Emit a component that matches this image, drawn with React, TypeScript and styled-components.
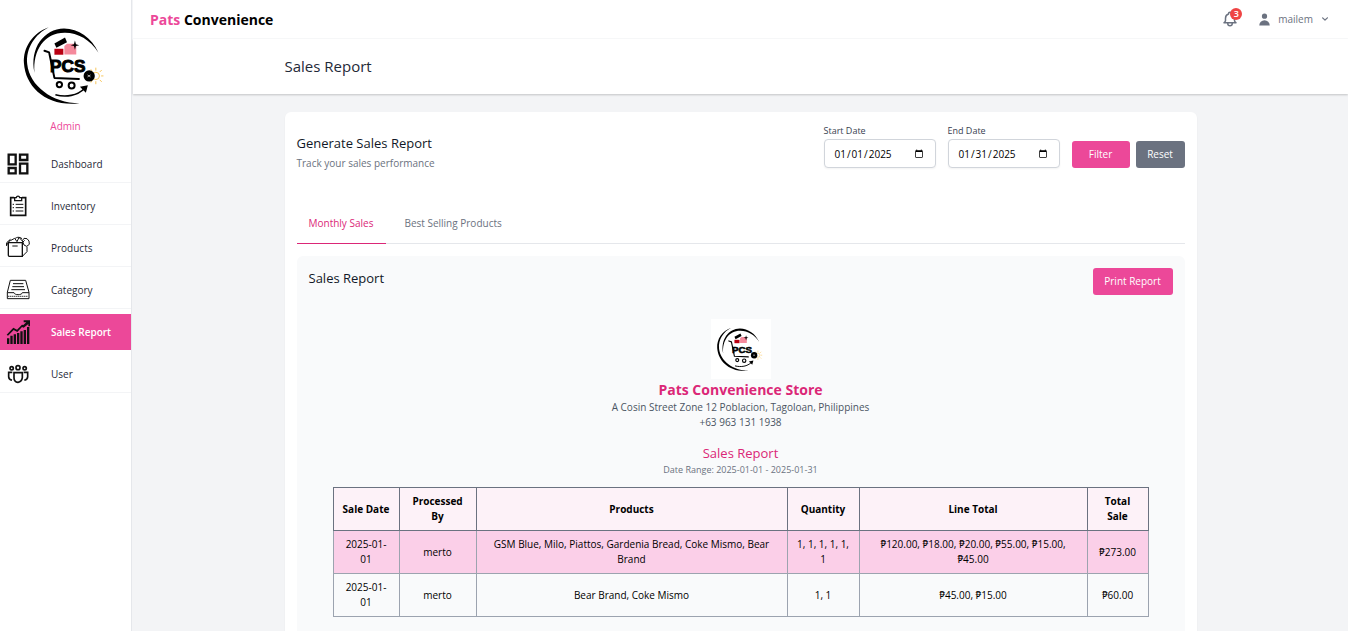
import React from "react";
import styled, { createGlobalStyle, css } from "styled-components";

const GlobalStyle = createGlobalStyle`
  *, *::before, *::after { box-sizing: border-box; }
  html { scrollbar-width: none; }
  body {
    margin: 0;
    background: #f3f4f6;
    color: #111827;
    font-family: "Open Sans", "Noto Sans", sans-serif;
    font-size: 10px;
    line-height: 15px;
  }
  h1, h2, h3, p { margin: 0; }
  button, input { font-family: inherit; }
`;

const Shell = styled.div`
  display: flex;
  gap: 1px;
  min-height: 100vh;
`;

const Sidebar = styled.aside`
  flex: 0 0 132px;
  background: #ffffff;
  border-right: 1px solid #e5e7eb;
  padding-top: 12px;
`;

const Brand = styled.div`
  display: flex;
  flex-direction: column;
  align-items: center;
  color: #ec4899;
`;

const Role = styled.span`
  font-size: 10px;
  line-height: 17px;
`;

const Nav = styled.nav`
  display: flex;
  flex-direction: column;
  gap: 6px;
  margin-top: 11px;
`;

const NavItem = styled.a<{ $active?: boolean }>`
  display: flex;
  align-items: center;
  gap: 21px;
  height: 36px;
  padding-left: 6px;
  font-size: 10px;
  line-height: 17px;
  color: #1f2937;
  text-decoration: none;
  box-shadow: 0 1px 0 #f3f4f6;
  svg { flex: none; color: #111111; }
  span { padding-top: 1px; }
  ${(p) =>
    p.$active &&
    css`
      background: #ec4899;
      color: #ffffff;
      font-weight: 600;
      box-shadow: none;
    `}
`;

const Main = styled.div`
  flex: 1;
  min-width: 0;
`;

const TopBar = styled.header`
  display: flex;
  align-items: center;
  justify-content: space-between;
  height: 39px;
  padding: 0 17px;
  background: #ffffff;
  border-bottom: 1px solid #f9fafb;
`;

const SiteName = styled.a`
  font-size: 14px;
  line-height: 21px;
  font-weight: 700;
  color: #000000;
  text-decoration: none;
  span { color: #ec4899; }
`;

const TopActions = styled.div`
  display: flex;
  align-items: center;
  gap: 18px;
  color: #6b7280;
`;

const IconButton = styled.button`
  position: relative;
  display: flex;
  padding: 0;
  border: 0;
  background: none;
  color: inherit;
`;

const Badge = styled.span`
  position: absolute;
  top: -2px;
  right: -3px;
  width: 12px;
  height: 12px;
  border-radius: 50%;
  background: #ef4444;
  color: #ffffff;
  font-size: 9px;
  line-height: 12px;
  font-weight: 600;
  text-align: center;
`;

const UserButton = styled.button`
  display: flex;
  align-items: center;
  gap: 6px;
  padding: 0;
  border: 0;
  background: none;
  color: #6b7280;
  font-size: 10px;
  line-height: 15px;
`;

const PageHeader = styled.div`
  background: #ffffff;
  box-shadow: 0 1px 2px rgba(0, 0, 0, 0.2);
`;

const Container = styled.div`
  max-width: 960px;
  margin: 0 auto;
  padding: 18px 24px;
`;

const PageTitle = styled.h1`
  font-size: 15px;
  line-height: 19px;
  font-weight: 400;
  color: #1f2937;
`;

const Card = styled.section`
  padding: 12px;
  background: #ffffff;
  border-radius: 6px;
  box-shadow: 0 1px 2px rgba(0, 0, 0, 0.05);
`;

const CardTop = styled.div`
  display: flex;
  justify-content: space-between;
  align-items: flex-start;
`;

const Intro = styled.div`
  padding-top: 9px;
`;

const Heading = styled.h2`
  font-size: 13px;
  line-height: 21px;
  font-weight: 500;
  color: #111827;
`;

const Subtle = styled.p`
  margin-top: 2px;
  font-size: 10px;
  line-height: 15px;
  color: #6b7280;
`;

const Filters = styled.form`
  display: flex;
  align-items: flex-end;
  gap: 12px;
`;

const Field = styled.div`
  display: flex;
  flex-direction: column;
  gap: 2px;
  width: 112px;
  label {
    font-size: 9px;
    line-height: 13px;
    color: #374151;
  }
  input {
    width: 100%;
    height: 29px;
    padding: 0 9px;
    border: 1px solid #d1d5db;
    border-radius: 4px;
    background: #ffffff;
    color: #000000;
    font-size: 10px;
    box-shadow: 0 1px 2px rgba(0, 0, 0, 0.05);
  }
  input::-webkit-calendar-picker-indicator {
    width: 10px;
    height: 10px;
    padding: 2px;
  }
`;

const ButtonPair = styled.div`
  display: flex;
  gap: 6px;
`;

const Button = styled.button<{ $tone?: "grey"; $width: number }>`
  width: ${(p) => p.$width}px;
  height: 27px;
  padding: 0;
  border: 0;
  border-radius: 3px;
  background: ${(p) => (p.$tone === "grey" ? "#6b7280" : "#ec4899")};
  color: #ffffff;
  font-size: 10px;
  line-height: 15px;
`;

const Tabs = styled.div`
  display: flex;
  gap: 6px;
  margin-top: 33px;
  box-shadow: inset 0 -1px 0 #e5e7eb;
`;

const Tab = styled.button<{ $active?: boolean }>`
  padding: 12px 13px 12px 12px;
  border: 0;
  border-bottom: 1px solid ${(p) => (p.$active ? "#db2777" : "transparent")};
  background: none;
  color: ${(p) => (p.$active ? "#db2777" : "#6b7280")};
  font-size: 10px;
  line-height: 15px;
  font-weight: 500;
`;

const Panel = styled.div`
  margin-top: 12px;
  padding: 12px;
  background: #f9fafb;
  border-radius: 6px;
`;

const PanelTop = styled.div`
  display: flex;
  justify-content: space-between;
  align-items: flex-start;
`;

const Report = styled.div`
  padding: 24px;
  text-align: center;
`;

const LogoTile = styled.div`
  display: flex;
  width: 60px;
  margin: 0 auto;
  background: #ffffff;
`;

const StoreName = styled.h2`
  font-size: 14px;
  line-height: 21px;
  font-weight: 700;
  color: #db2777;
`;

const StoreLine = styled.p`
  font-size: 10px;
  line-height: 15px;
  color: #4b5563;
`;

const ReportTitle = styled.h3`
  margin-top: 13px;
  font-size: 13px;
  line-height: 21px;
  font-weight: 500;
  color: #db2777;
`;

const Range = styled.p`
  font-size: 9px;
  line-height: 12px;
  color: #6b7280;
`;

const SalesTable = styled.table`
  width: 100%;
  margin-top: 11px;
  table-layout: fixed;
  border-collapse: collapse;
  font-size: 10px;
  line-height: 15px;
  color: #000000;
  th, td { padding: 6px 9px; }
  td { border: 1px solid #9ca3af; }
  th {
    border: 1px solid #6b7280;
    background: #fdf2f8;
    font-weight: 700;
  }
  tbody tr:nth-child(odd) { background: #fbcfe8; }
`;

const Col = styled.col<{ $width?: number }>`
  width: ${(p) => (p.$width ? `${p.$width}px` : "auto")};
`;

const Logo = ({ size }: { size: number }) => (
  <svg width={size} height={size} viewBox="40 36 320 320" fill="none" role="img" aria-label="PCS">
    <path d="M148 82C99 99 70 143 73 191C78 263 140 323 241 312C157 311 90 258 83 194C78 144 107 103 148 82Z" fill="#000" />
    <path d="M105 220C89 145 134 87 194 86C238 87 277 113 298 159C273 120 236 99 197 99C136 98 99 151 105 220Z" fill="#000" />
    <path d="M165 131L197 113L203 127L171 144Z" fill="#000" />
    <path d="M165 147H192V165H165Z" fill="#b90012" />
    <path d="M195 139L203 132H231V164H195Z" fill="#f58a9c" />
    <path d="M227 122L230 133L240 136L230 139L227 150L224 139L214 136L224 133Z" fill="#000" />
    <path d="M135 153L149 158L165 235L239 238" stroke="#000" strokeWidth="6" strokeLinecap="round" strokeLinejoin="round" />
    <text x="152" y="216" fontFamily="Liberation Sans, sans-serif" fontWeight="700" fontSize="52" fill="#000" stroke="#000" strokeWidth="3">PCS</text>
    <circle cx="180" cy="255" r="8" stroke="#000" strokeWidth="6" />
    <circle cx="217" cy="258" r="9" stroke="#000" strokeWidth="6" />
    <path d="M168 286C200 294 234 289 256 267" stroke="#000" strokeWidth="5" />
    <path d="M242 262L266 257L260 280Z" fill="#000" />
    <g stroke="#f7c65c" strokeWidth="3">
      <circle cx="290" cy="229" r="11" />
      <path d="M290 213V204M290 245V254M306 229H313M302 217L308 211M302 241L308 247M279 215L275 209M279 243L275 249" />
    </g>
    <circle cx="270" cy="229" r="17" fill="#000" />
    <path d="M265 226L274 232M265 232L274 226" stroke="#fff" strokeWidth="2" />
  </svg>
);

const icon = (viewBox: string, children: React.ReactNode) => (
  <svg width="24" height="24" viewBox={viewBox} fill="none" stroke="currentColor" aria-hidden="true">
    {children}
  </svg>
);

const icons = {
  dashboard: icon(
    "18 36 72 72",
    <path strokeWidth="7" d="M26 44H47V73H26ZM60 44H82V60H60ZM26 84H47V100H26ZM60 71H82V100H60Z" />
  ),
  inventory: icon(
    "18 162 72 72",
    <g strokeWidth="5">
      <path d="M42 173H32V226H77V173H66" />
      <path d="M44 173V182H65V173H59C58 167 50 167 49 173Z" strokeWidth="4" />
      <path d="M38 193H42M38 203H42M38 213H42M47 193H70M47 203H70M47 213H70" strokeWidth="3" />
    </g>
  ),
  products: icon(
    "18 288 72 72",
    <g strokeWidth="4">
      <path d="M25 308H67V349H28Q25 349 25 346Z" />
      <path d="M67 349L81 335V320M67 308L74 301M25 308L20 315M25 308L31 299M20 318L19 309L31 298M37 318H53" strokeWidth="3" />
      <path d="M31 302L44 295L51 305L57 292L68 304M45 296C50 291 58 290 66 296" strokeWidth="3" />
      <path d="M67 302L72 295L81 296L87 303L88 313L80 319L72 315Z" strokeWidth="3" />
    </g>
  ),
  category: icon(
    "18 39 72 72",
    <g strokeWidth="3">
      <path d="M22 82L31 46H77L87 82V101H22Z" />
      <path d="M22 83H42C43 91 66 91 67 83H87" />
      <path d="M39 56H70M37 65H72M34 74H75" />
      <path d="M25 94H85" strokeDasharray="3 3" strokeWidth="4" />
    </g>
  ),
  sales: icon(
    "18 165 72 72",
    <g stroke="none" fill="currentColor">
      <path d="M21 220H28V237H21ZM31 212H38V237H31ZM41 208H48V237H41ZM51 204H58V237H51ZM61 199H68V237H61ZM71 195H78V237H71ZM81 186H88V237H81Z" />
      <path d="M20 209L40 188L51 194L66 179L70 180L79 172H71V166H90V184H85V177L71 188L66 186L52 201L41 195L24 212Z" />
    </g>
  ),
  user: icon(
    "18 291 72 72",
    <g strokeWidth="5">
      <circle cx="35" cy="310" r="5" />
      <circle cx="54" cy="308" r="6" />
      <circle cx="74" cy="310" r="5" />
      <path d="M42 323H67V338C66 345 62 351 54 352C46 351 42 345 42 338Z" />
      <path d="M37 322H26V335C26 341 30 344 36 346M71 322H83V335C83 341 79 344 73 346" />
    </g>
  ),
};

const navItems: { label: string; icon: React.ReactNode; active?: boolean }[] = [
  { label: "Dashboard", icon: icons.dashboard },
  { label: "Inventory", icon: icons.inventory },
  { label: "Products", icon: icons.products },
  { label: "Category", icon: icons.category },
  { label: "Sales Report", icon: icons.sales, active: true },
  { label: "User", icon: icons.user },
];

const columns: { title: string; width?: number }[] = [
  { title: "Sale Date", width: 66 },
  { title: "Processed By", width: 77 },
  { title: "Products" },
  { title: "Quantity", width: 72 },
  { title: "Line Total", width: 228 },
  { title: "Total Sale", width: 61 },
];

const sales = [
  ["2025-01-01", "merto", "GSM Blue, Milo, Piattos, Gardenia Bread, Coke Mismo, Bear Brand", "1, 1, 1, 1, 1, 1", "₱120.00, ₱18.00, ₱20.00, ₱55.00, ₱15.00, ₱45.00", "₱273.00"],
  ["2025-01-01", "merto", "Bear Brand, Coke Mismo", "1, 1", "₱45.00, ₱15.00", "₱60.00"],
];

export default function App() {
  return (
    <>
      <GlobalStyle />
      <Shell>
        <Sidebar>
          <Brand>
            <Logo size={106} />
            <Role>Admin</Role>
          </Brand>
          <Nav>
            {navItems.map((item) => (
              <NavItem key={item.label} href="#" $active={item.active}>
                {item.icon}
                <span>{item.label}</span>
              </NavItem>
            ))}
          </Nav>
        </Sidebar>
        <Main>
          <TopBar>
            <SiteName href="#">
              <span>Pats</span> Convenience
            </SiteName>
            <TopActions>
              <IconButton type="button" aria-label="Notifications">
                <svg width="18" height="18" viewBox="0 0 24 24" fill="none" stroke="currentColor" strokeWidth="2" strokeLinecap="round" strokeLinejoin="round">
                  <path d="M15 17h5l-1.405-1.405A2.032 2.032 0 0118 14.158V11a6.002 6.002 0 00-4-5.659V5a2 2 0 10-4 0v.341C7.67 6.165 6 8.388 6 11v3.159c0 .538-.214 1.055-.595 1.436L4 17h5m6 0v1a3 3 0 11-6 0v-1m6 0H9" />
                </svg>
                <Badge>3</Badge>
              </IconButton>
              <UserButton type="button">
                <svg width="15" height="15" viewBox="0 0 20 20" fill="currentColor">
                  <path fillRule="evenodd" d="M10 9a3.500 3.500 0 100-7 3.500 3.500 0 000 7zm-7 9a7 7 0 1114 0H3z" clipRule="evenodd" />
                </svg>
                mailem
                <svg width="12" height="12" viewBox="0 0 20 20" fill="currentColor">
                  <path fillRule="evenodd" d="M5.293 7.293a1 1 0 011.414 0L10 10.586l3.293-3.293a1 1 0 111.414 1.414l-4 4a1 1 0 01-1.414 0l-4-4a1 1 0 010-1.414z" clipRule="evenodd" />
                </svg>
              </UserButton>
            </TopActions>
          </TopBar>
          <PageHeader>
            <Container>
              <PageTitle>Sales Report</PageTitle>
            </Container>
          </PageHeader>
          <Container as="main">
            <Card>
              <CardTop>
                <Intro>
                  <Heading>Generate Sales Report</Heading>
                  <Subtle>Track your sales performance</Subtle>
                </Intro>
                <Filters>
                  <Field>
                    <label htmlFor="start">Start Date</label>
                    <input id="start" type="date" defaultValue="2025-01-01" />
                  </Field>
                  <Field>
                    <label htmlFor="end">End Date</label>
                    <input id="end" type="date" defaultValue="2025-01-31" />
                  </Field>
                  <ButtonPair>
                    <Button type="button" $width={58}>Filter</Button>
                    <Button type="button" $tone="grey" $width={49}>Reset</Button>
                  </ButtonPair>
                </Filters>
              </CardTop>
              <Tabs role="tablist">
                <Tab type="button" role="tab" aria-selected="true" $active>Monthly Sales</Tab>
                <Tab type="button" role="tab" aria-selected="false">Best Selling Products</Tab>
              </Tabs>
              <Panel>
                <PanelTop>
                  <Heading>Sales Report</Heading>
                  <Button type="button" $width={80}>Print Report</Button>
                </PanelTop>
                <Report>
                  <LogoTile>
                    <Logo size={60} />
                  </LogoTile>
                  <StoreName>Pats Convenience Store</StoreName>
                  <StoreLine>A Cosin Street Zone 12 Poblacion, Tagoloan, Philippines</StoreLine>
                  <StoreLine>+63 963 131 1938</StoreLine>
                  <ReportTitle>Sales Report</ReportTitle>
                  <Range>Date Range: 2025-01-01 - 2025-01-31</Range>
                  <SalesTable>
                    <colgroup>
                      {columns.map((c) => (
                        <Col key={c.title} $width={c.width} />
                      ))}
                    </colgroup>
                    <thead>
                      <tr>
                        {columns.map((c) => (
                          <th key={c.title} scope="col">{c.title}</th>
                        ))}
                      </tr>
                    </thead>
                    <tbody>
                      {sales.map((row, i) => (
                        <tr key={i}>
                          {row.map((cell, j) => (
                            <td key={j}>{cell}</td>
                          ))}
                        </tr>
                      ))}
                    </tbody>
                  </SalesTable>
                </Report>
              </Panel>
            </Card>
          </Container>
        </Main>
      </Shell>
    </>
  );
}
